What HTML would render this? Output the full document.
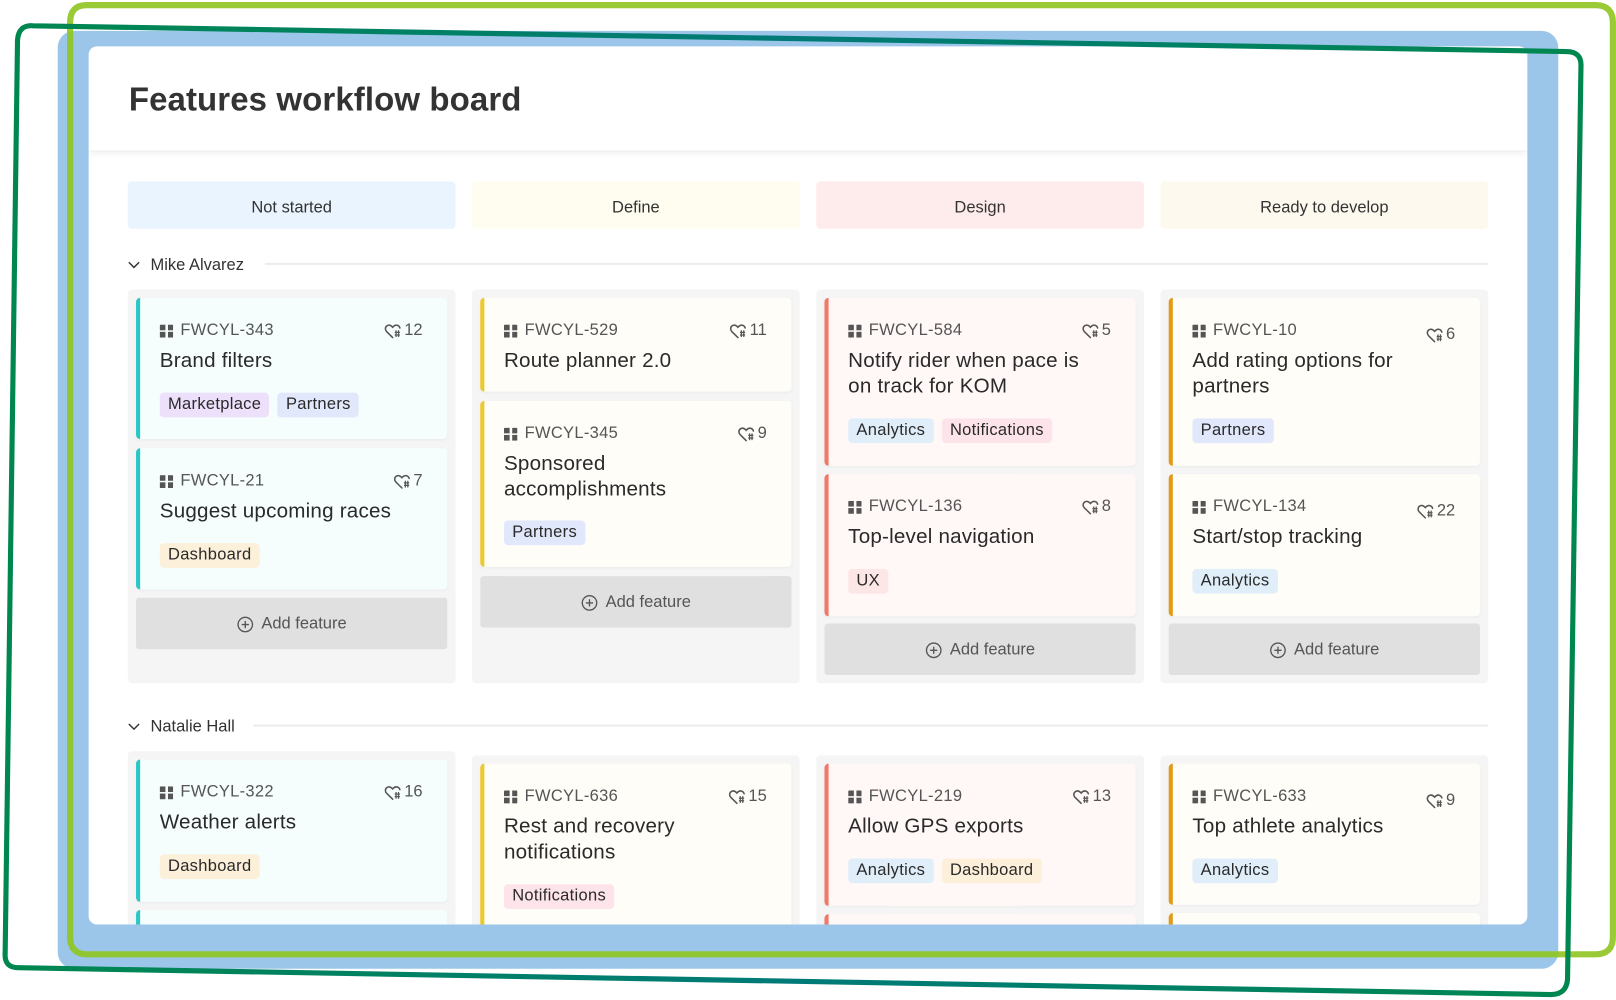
<!DOCTYPE html>
<html><head><meta charset="utf-8"><style>
html,body{margin:0;padding:0;width:1616px;height:1000px;overflow:hidden;background:#fff}
#s{position:absolute;left:0;top:0;width:1568px;height:970px;transform:scale(1.0306);transform-origin:0 0;font-family:"Liberation Sans",sans-serif;color:#2b2b2b}
.abs{position:absolute}
.blue{left:56px;top:30px;width:1456px;height:910px;background:#9bc6ea;border-radius:16px}
.panel{left:86px;top:45px;width:1396px;height:852px;background:#fff;border-radius:8px;overflow:hidden}
.hdr{left:0;top:0;width:1396px;height:101px;box-shadow:0 3px 6px rgba(0,0,0,.05);border-bottom:1px solid #f0f0f0}
h1{position:absolute;left:39px;top:33px;margin:0;font-size:32px;font-weight:bold;color:#333;letter-spacing:0.1px}
.colh{height:46px;width:318px;border-radius:4px;font-size:16px;line-height:52px;text-align:center;color:#333}
.grp{font-size:16px;color:#333}
.line{height:1.5px;background:#ececec}
.lane{width:318px;background:#f5f5f5;border-radius:4px}
.card{position:absolute;left:8px;width:302px;border-radius:4px;box-shadow:0 1px 2px rgba(0,0,0,.04)}
.card .bar{position:absolute;left:0;top:0;bottom:0;width:4px;border-radius:4px 0 0 4px}
.id{position:absolute;left:23px;top:23px;font-size:16px;letter-spacing:0.3px;color:#555;display:flex;align-items:center;gap:7px}
.cnt{position:absolute;right:24px;top:23px;font-size:16px;color:#555;display:flex;align-items:center;gap:1px}
.ttl{position:absolute;left:23px;top:49px;width:240px;font-size:20px;letter-spacing:0.2px;line-height:25px;color:#2a2a2a}
.tags{position:absolute;left:23px;display:flex;gap:8px;margin-top:1px}
.tag{font-size:16px;letter-spacing:0.3px;height:24px;line-height:24px;padding:0 8px;border-radius:4px;color:#2a2a2a}
.add{position:absolute;left:8px;width:302px;height:50px;background:#e0e0e0;border-radius:3px;font-size:16px;color:#555;display:flex;align-items:center;justify-content:center;gap:8px;padding-top:2px;box-sizing:border-box}
.mk{background:#ede0fb}.pa{background:#e2e8fb}.da{background:#fdf0da}.an{background:#e0eefa}.no{background:#fde3ea}.ux{background:#fde6e6}
.ns{background:#f6fdfd}.df{background:#fffdf7}.ds{background:#fff8f7}.rd{background:#fffdf8}
i.g{display:inline-block;width:13px;height:13px;background:
linear-gradient(#555,#555) 0 0/5.5px 5.5px no-repeat,
linear-gradient(#555,#555) 7.5px 0/5.5px 5.5px no-repeat,
linear-gradient(#555,#555) 0 7.5px/5.5px 5.5px no-repeat,
linear-gradient(#555,#555) 7.5px 7.5px/5.5px 5.5px no-repeat;border-radius:1px}
</style></head><body><div id="s">
<div class="abs blue"></div>
<div class="abs panel">
 <div class="abs hdr"><h1>Features workflow board</h1></div>
</div>
<div class="abs" style="left:86px;top:45px;width:1396px;height:852px;overflow:hidden;border-radius:8px">
 <div id="c" class="abs" style="left:-86px;top:-45px;width:1568px;height:970px">
  <div class="abs colh" style="left:124px;top:176px;background:#eaf4fe">Not started</div>
  <div class="abs colh" style="left:458px;top:176px;background:#fefdf0">Define</div>
  <div class="abs colh" style="left:792px;top:176px;background:#fdeceb">Design</div>
  <div class="abs colh" style="left:1126px;top:176px;background:#fdf9ee">Ready to develop</div>

  <svg class="abs" style="left:124px;top:251px" width="12" height="12" viewBox="0 0 12 12"><path d="M1 3.5l5 5 5-5" fill="none" stroke="#333" stroke-width="1.4"/></svg>
  <div class="abs grp" style="left:146px;top:249px">Mike Alvarez</div>
  <div class="abs line" style="left:257px;top:255px;width:1187px"></div>
  <svg class="abs" style="left:124px;top:699px" width="12" height="12" viewBox="0 0 12 12"><path d="M1 3.5l5 5 5-5" fill="none" stroke="#333" stroke-width="1.4"/></svg>
  <div class="abs grp" style="left:146px;top:697px">Natalie Hall</div>
  <div class="abs line" style="left:246px;top:703px;width:1198px"></div>

  <div class="abs lane" style="left:124px;top:281px;height:382px">
   <div class="card ns" style="top:8px;height:137px"><div class="bar" style="background:#2bc6c6"></div><div class="id"><i class="g"></i>FWCYL-343</div><div class="cnt"><i class="h"></i>12</div><div class="ttl">Brand filters</div><div class="tags" style="top:91px"><span class="tag mk">Marketplace</span><span class="tag pa">Partners</span></div></div>
   <div class="card ns" style="top:154px;height:137px"><div class="bar" style="background:#2bc6c6"></div><div class="id"><i class="g"></i>FWCYL-21</div><div class="cnt"><i class="h"></i>7</div><div class="ttl">Suggest upcoming races</div><div class="tags" style="top:91px"><span class="tag da">Dashboard</span></div></div>
   <div class="add" style="top:299px"><i class="p"></i>Add feature</div>
  </div>
  <div class="abs lane" style="left:458px;top:281px;height:382px">
   <div class="card df" style="top:8px;height:91px"><div class="bar" style="background:#ecc92e"></div><div class="id"><i class="g"></i>FWCYL-529</div><div class="cnt"><i class="h"></i>11</div><div class="ttl">Route planner 2.0</div></div>
   <div class="card df" style="top:108px;height:161px"><div class="bar" style="background:#ecc92e"></div><div class="id"><i class="g"></i>FWCYL-345</div><div class="cnt"><i class="h"></i>9</div><div class="ttl">Sponsored accomplishments</div><div class="tags" style="top:115px"><span class="tag pa">Partners</span></div></div>
   <div class="add" style="top:278px"><i class="p"></i>Add feature</div>
  </div>
  <div class="abs lane" style="left:792px;top:281px;height:382px">
   <div class="card ds" style="top:8px;height:163px"><div class="bar" style="background:#f2796a"></div><div class="id"><i class="g"></i>FWCYL-584</div><div class="cnt"><i class="h"></i>5</div><div class="ttl">Notify rider when pace is on track for KOM</div><div class="tags" style="top:116px"><span class="tag an">Analytics</span><span class="tag no">Notifications</span></div></div>
   <div class="card ds" style="top:179px;height:138px"><div class="bar" style="background:#f2796a"></div><div class="id"><i class="g"></i>FWCYL-136</div><div class="cnt"><i class="h"></i>8</div><div class="ttl">Top-level navigation</div><div class="tags" style="top:91px"><span class="tag ux">UX</span></div></div>
   <div class="add" style="top:324px"><i class="p"></i>Add feature</div>
  </div>
  <div class="abs lane" style="left:1126px;top:281px;height:382px">
   <div class="card rd" style="top:8px;height:163px"><div class="bar" style="background:#e39a16"></div><div class="id"><i class="g"></i>FWCYL-10</div><div class="cnt" style="top:27px"><i class="h"></i>6</div><div class="ttl">Add rating options for partners</div><div class="tags" style="top:116px"><span class="tag pa">Partners</span></div></div>
   <div class="card rd" style="top:179px;height:138px"><div class="bar" style="background:#e39a16"></div><div class="id"><i class="g"></i>FWCYL-134</div><div class="cnt" style="top:27px"><i class="h"></i>22</div><div class="ttl">Start/stop tracking</div><div class="tags" style="top:91px"><span class="tag an">Analytics</span></div></div>
   <div class="add" style="top:324px"><i class="p"></i>Add feature</div>
  </div>

  <div class="abs lane" style="left:124px;top:729px;height:250px">
   <div class="card ns" style="top:8px;height:138px"><div class="bar" style="background:#2bc6c6"></div><div class="id"><i class="g"></i>FWCYL-322</div><div class="cnt"><i class="h"></i>16</div><div class="ttl">Weather alerts</div><div class="tags" style="top:91px"><span class="tag da">Dashboard</span></div></div>
   <div class="card ns" style="top:154px;height:90px"><div class="bar" style="background:#2bc6c6"></div></div>
  </div>
  <div class="abs lane" style="left:458px;top:733px;height:250px">
   <div class="card df" style="top:8px;height:200px"><div class="bar" style="background:#ecc92e"></div><div class="id"><i class="g"></i>FWCYL-636</div><div class="cnt"><i class="h"></i>15</div><div class="ttl">Rest and recovery notifications</div><div class="tags" style="top:116px"><span class="tag no">Notifications</span></div></div>
  </div>
  <div class="abs lane" style="left:792px;top:733px;height:250px">
   <div class="card ds" style="top:8px;height:138px"><div class="bar" style="background:#f2796a"></div><div class="id"><i class="g"></i>FWCYL-219</div><div class="cnt"><i class="h"></i>13</div><div class="ttl">Allow GPS exports</div><div class="tags" style="top:91px"><span class="tag an">Analytics</span><span class="tag da">Dashboard</span></div></div>
   <div class="card ds" style="top:154px;height:90px"><div class="bar" style="background:#f2796a"></div></div>
  </div>
  <div class="abs lane" style="left:1126px;top:733px;height:250px">
   <div class="card rd" style="top:8px;height:137px"><div class="bar" style="background:#e39a16"></div><div class="id"><i class="g"></i>FWCYL-633</div><div class="cnt" style="top:27px"><i class="h"></i>9</div><div class="ttl">Top athlete analytics</div><div class="tags" style="top:91px"><span class="tag an">Analytics</span></div></div>
   <div class="card rd" style="top:153px;height:90px"><div class="bar" style="background:#e39a16"></div></div>
  </div>
 </div>
</div>

<svg class="abs" style="left:0;top:0" width="1568" height="970" viewBox="0 0 1568 970">
 <path d="M84 5 H1548 Q1565 5 1565 22 V909 Q1565 926 1548 926 H85 Q68 926 68 909 V22 Q68 5 84 5 Z" fill="none" stroke="#8fc41f" stroke-width="6" opacity="0.9"/>
 <defs><linearGradient id="dg" x1="0" y1="0" x2="1" y2="0"><stop offset="0" stop-color="#00874f"/><stop offset="0.5" stop-color="#007a78"/><stop offset="1" stop-color="#00874f"/></linearGradient></defs>
 <path d="M32 25 L1520 50 Q1535 50 1534 65 L1521 950 Q1520 965 1505 965 L18 939 Q4 939 5 925 L17 39 Q18 24 32 25 Z" fill="none" stroke="url(#dg)" stroke-width="5"/>
</svg>

<script>
document.querySelectorAll('i.h').forEach(function(e){e.outerHTML='<svg width="18" height="15" viewBox="0 0 18 15"><path d="M8 13.5 L2.2 7.8 C0.4 6 0.6 3 2.8 1.9 C4.7 1 6.6 1.8 8 3.5 C9.4 1.8 11.3 1 13.2 1.9 C14.2 2.4 14.8 3.2 15 4.2" fill="none" stroke="#555" stroke-width="1.5" stroke-linecap="round"/><path d="M11.3 6.5v6.5M13.7 6.5v6.5M10 8.5h5M10 11h5" stroke="#555" stroke-width="1.2"/></svg>';});
document.querySelectorAll('i.p').forEach(function(e){e.outerHTML='<svg width="16" height="16" viewBox="0 0 16 16"><circle cx="8" cy="8" r="7" fill="none" stroke="#555" stroke-width="1.3"/><path d="M8 4.5v7M4.5 8h7" stroke="#555" stroke-width="1.3"/></svg>';});
</script>
</div></body></html>
